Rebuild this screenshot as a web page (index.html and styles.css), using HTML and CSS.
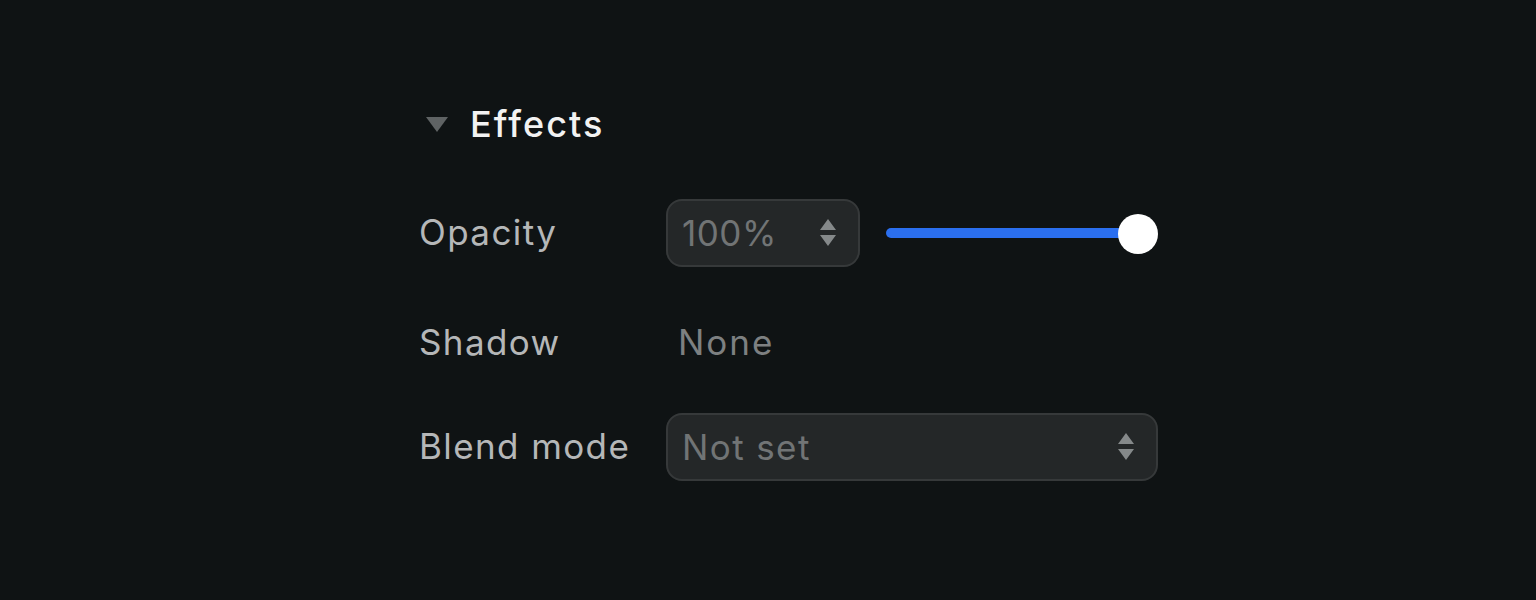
FILE: index.html
```html
<!DOCTYPE html>
<html>
<head>
<meta charset="utf-8">
<link rel="stylesheet" href="styles.css">
</head>
<body>
<div class="panel">
  <div class="title">
    <svg class="caret" width="22" height="16" viewBox="0 0 22 16"><path d="M0 0 L22 0 L11 15 Z" fill="#5f6364"/></svg>
    <span>Effects</span>
  </div>
  <div class="grid">
    <div class="label">Opacity</div>
    <div class="ctrl">
      <div class="field num">
        <span class="val">100%</span>
        <svg class="step" width="16" height="28" viewBox="0 0 16 28"><path d="M8 0 L16 11 L0 11 Z M0 16 L16 16 L8 27 Z" fill="#85898a"/></svg>
      </div>
      <div class="slider">
        <div class="track"></div>
        <div class="knob"></div>
      </div>
    </div>
    <div class="label shadow">Shadow</div>
    <div class="ctrl shadow"><span class="none">None</span></div>
    <div class="label">Blend mode</div>
    <div class="ctrl">
      <div class="field sel">
        <span class="val">Not set</span>
        <svg class="step" width="16" height="28" viewBox="0 0 16 28"><path d="M8 0 L16 11 L0 11 Z M0 16 L16 16 L8 27 Z" fill="#85898a"/></svg>
      </div>
    </div>
  </div>
</div>
</body>
</html>
```
FILE: styles.css
```css
html, body {
  margin: 0;
  padding: 0;
  background: #0f1314;
  width: 1536px;
  height: 600px;
  overflow: hidden;
  font-family: Inter, "Noto Sans", sans-serif;
}
.panel {
  padding-top: 100px;
  padding-left: 420px;
}
.title {
  display: flex;
  align-items: center;
  height: 48px;
  color: #f2f2f2;
  font-size: 36px;
  font-weight: 500;
  letter-spacing: 2.1px;
}
.caret {
  margin-left: 6px;
  margin-right: 22px;
  margin-top: 2px;
}
.grid {
  margin-top: 51px;
  display: grid;
  grid-template-columns: 246px auto;
  grid-auto-rows: 68px;
  row-gap: 39px;
  align-items: center;
}
.label {
  color: #b5b7b8;
  font-size: 35px;
  letter-spacing: 1.4px;
  margin-left: -1px;
  margin-top: -2px;
}
.label.shadow {
  margin-top: 4px;
}
.ctrl {
  display: flex;
  align-items: center;
  height: 68px;
}
.ctrl.shadow {
  padding-top: 4px;
}
.field {
  box-sizing: border-box;
  height: 68px;
  background: #242728;
  border: 2px solid #36393a;
  border-radius: 16px;
  display: flex;
  align-items: center;
  padding-left: 14px;
  padding-right: 22px;
  justify-content: space-between;
}
.num { width: 194px; }
.sel { width: 492px; }
.val {
  color: #717475;
  font-size: 35px;
  letter-spacing: 1.4px;
}
.num .val { letter-spacing: 0.5px; }
.step { display: block; }
.none {
  color: #7d8081;
  font-size: 35px;
  letter-spacing: 2px;
  margin-left: 12px;
}
.slider {
  position: relative;
  margin-left: 26px;
  width: 272px;
  height: 40px;
  display: flex;
  align-items: center;
}
.track {
  width: 254px;
  height: 10px;
  border-radius: 5px;
  background: #2b6fef;
}
.knob {
  position: absolute;
  right: 0;
  top: 1px;
  width: 40px;
  height: 40px;
  border-radius: 50%;
  background: #ffffff;
}
```
